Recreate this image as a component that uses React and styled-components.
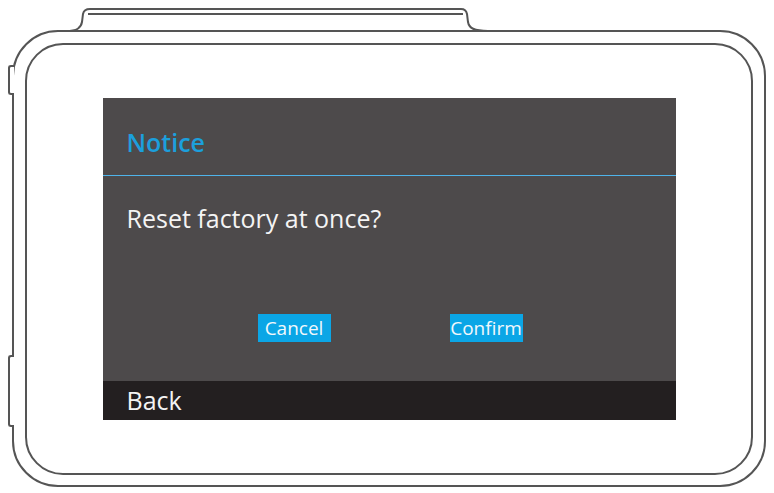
import React from 'react';
import styled, { createGlobalStyle } from 'styled-components';

const GlobalStyle = createGlobalStyle`
  html, body {
    margin: 0;
    padding: 0;
    background: #fff;
  }
  body {
    font-family: "Open Sans", "Liberation Sans", sans-serif;
  }
`;

const Page = styled.div`
  position: relative;
  width: 774px;
  height: 493px;
  overflow: hidden;
  background: #fff;
`;

// Camera body outline
const Body = styled.div`
  position: relative;
  box-sizing: border-box;
  margin: 30px 0 0 12px;
  width: 754px;
  height: 457px;
  border: 2px solid #555;
  border-radius: 46px;
  padding: 11px 11px 10px 11px;
`;

const Bezel = styled.div`
  box-sizing: border-box;
  width: 100%;
  height: 100%;
  border: 2px solid #555;
  border-radius: 38px;
  padding-top: 53px;
`;

const SideButton = styled.div`
  position: absolute;
  left: -6px;
  top: ${(p) => p.$top}px;
  width: 4px;
  height: ${(p) => p.$height}px;
  border: 2px solid #555;
  border-right: none;
  border-radius: 3px 0 0 3px;
  background: #fff;
`;

const TopButton = styled.svg`
  position: absolute;
  left: 0;
  top: 0;
  overflow: visible;
`;

// Screen
const Screen = styled.div`
  box-sizing: border-box;
  width: 573px;
  height: 322px;
  margin: 0 auto;
  background: #4d4a4b;
  display: flex;
  flex-direction: column;
`;

const Header = styled.div`
  box-sizing: border-box;
  height: 78px;
  padding: 32px 0 0 24px;
  border-bottom: 1px solid #4fb4ea;
`;

const Title = styled.div`
  font-size: 25px;
  line-height: 25px;
  font-weight: 600;
  color: #1c9fdc;
`;

const Content = styled.div`
  flex: 1;
  display: flex;
  flex-direction: column;
  padding: 30px 0 39px 24px;
`;

const Message = styled.div`
  font-size: 25px;
  line-height: 25px;
  color: #f4f4f4;
`;

const Actions = styled.div`
  margin-top: auto;
  display: flex;
  justify-content: center;
  gap: 119px;
  padding-right: 22px;
`;

const ActionButton = styled.button`
  box-sizing: border-box;
  width: 73px;
  height: 28px;
  padding: 0;
  border: none;
  background: #0ba6e6;
  color: #f2f8fc;
  font-family: "Open Sans", "Liberation Sans", sans-serif;
  font-size: 19px;
  line-height: 28px;
  text-align: center;
`;

const BackBar = styled.div`
  box-sizing: border-box;
  height: 39px;
  padding-left: 24px;
  background: #231f20;
  color: #f4f4f4;
  font-size: 25px;
  line-height: 39px;
`;

export default function App() {
  return (
    <>
      <GlobalStyle />
      <Page>
        <TopButton width="774" height="40">
          <path
            d="M 66 31 C 77 31, 81 28, 82 22 L 83 14 Q 84 9, 90 9 L 461 9 Q 466 9, 467 14 L 468 22 C 469 28, 474 31, 488 31"
            fill="#fff"
            stroke="#555"
            strokeWidth="2"
          />
          <path d="M 88 14 L 463 14" stroke="#555" strokeWidth="2" fill="none" />
        </TopButton>
        <Body>
          <SideButton $top={33} $height={26} />
          <SideButton $top={323} $height={68} />
          <Bezel>
            <Screen>
              <Header>
                <Title>Notice</Title>
              </Header>
              <Content>
                <Message>Reset factory at once?</Message>
                <Actions>
                  <ActionButton>Cancel</ActionButton>
                  <ActionButton>Confirm</ActionButton>
                </Actions>
              </Content>
              <BackBar>Back</BackBar>
            </Screen>
          </Bezel>
        </Body>
      </Page>
    </>
  );
}
